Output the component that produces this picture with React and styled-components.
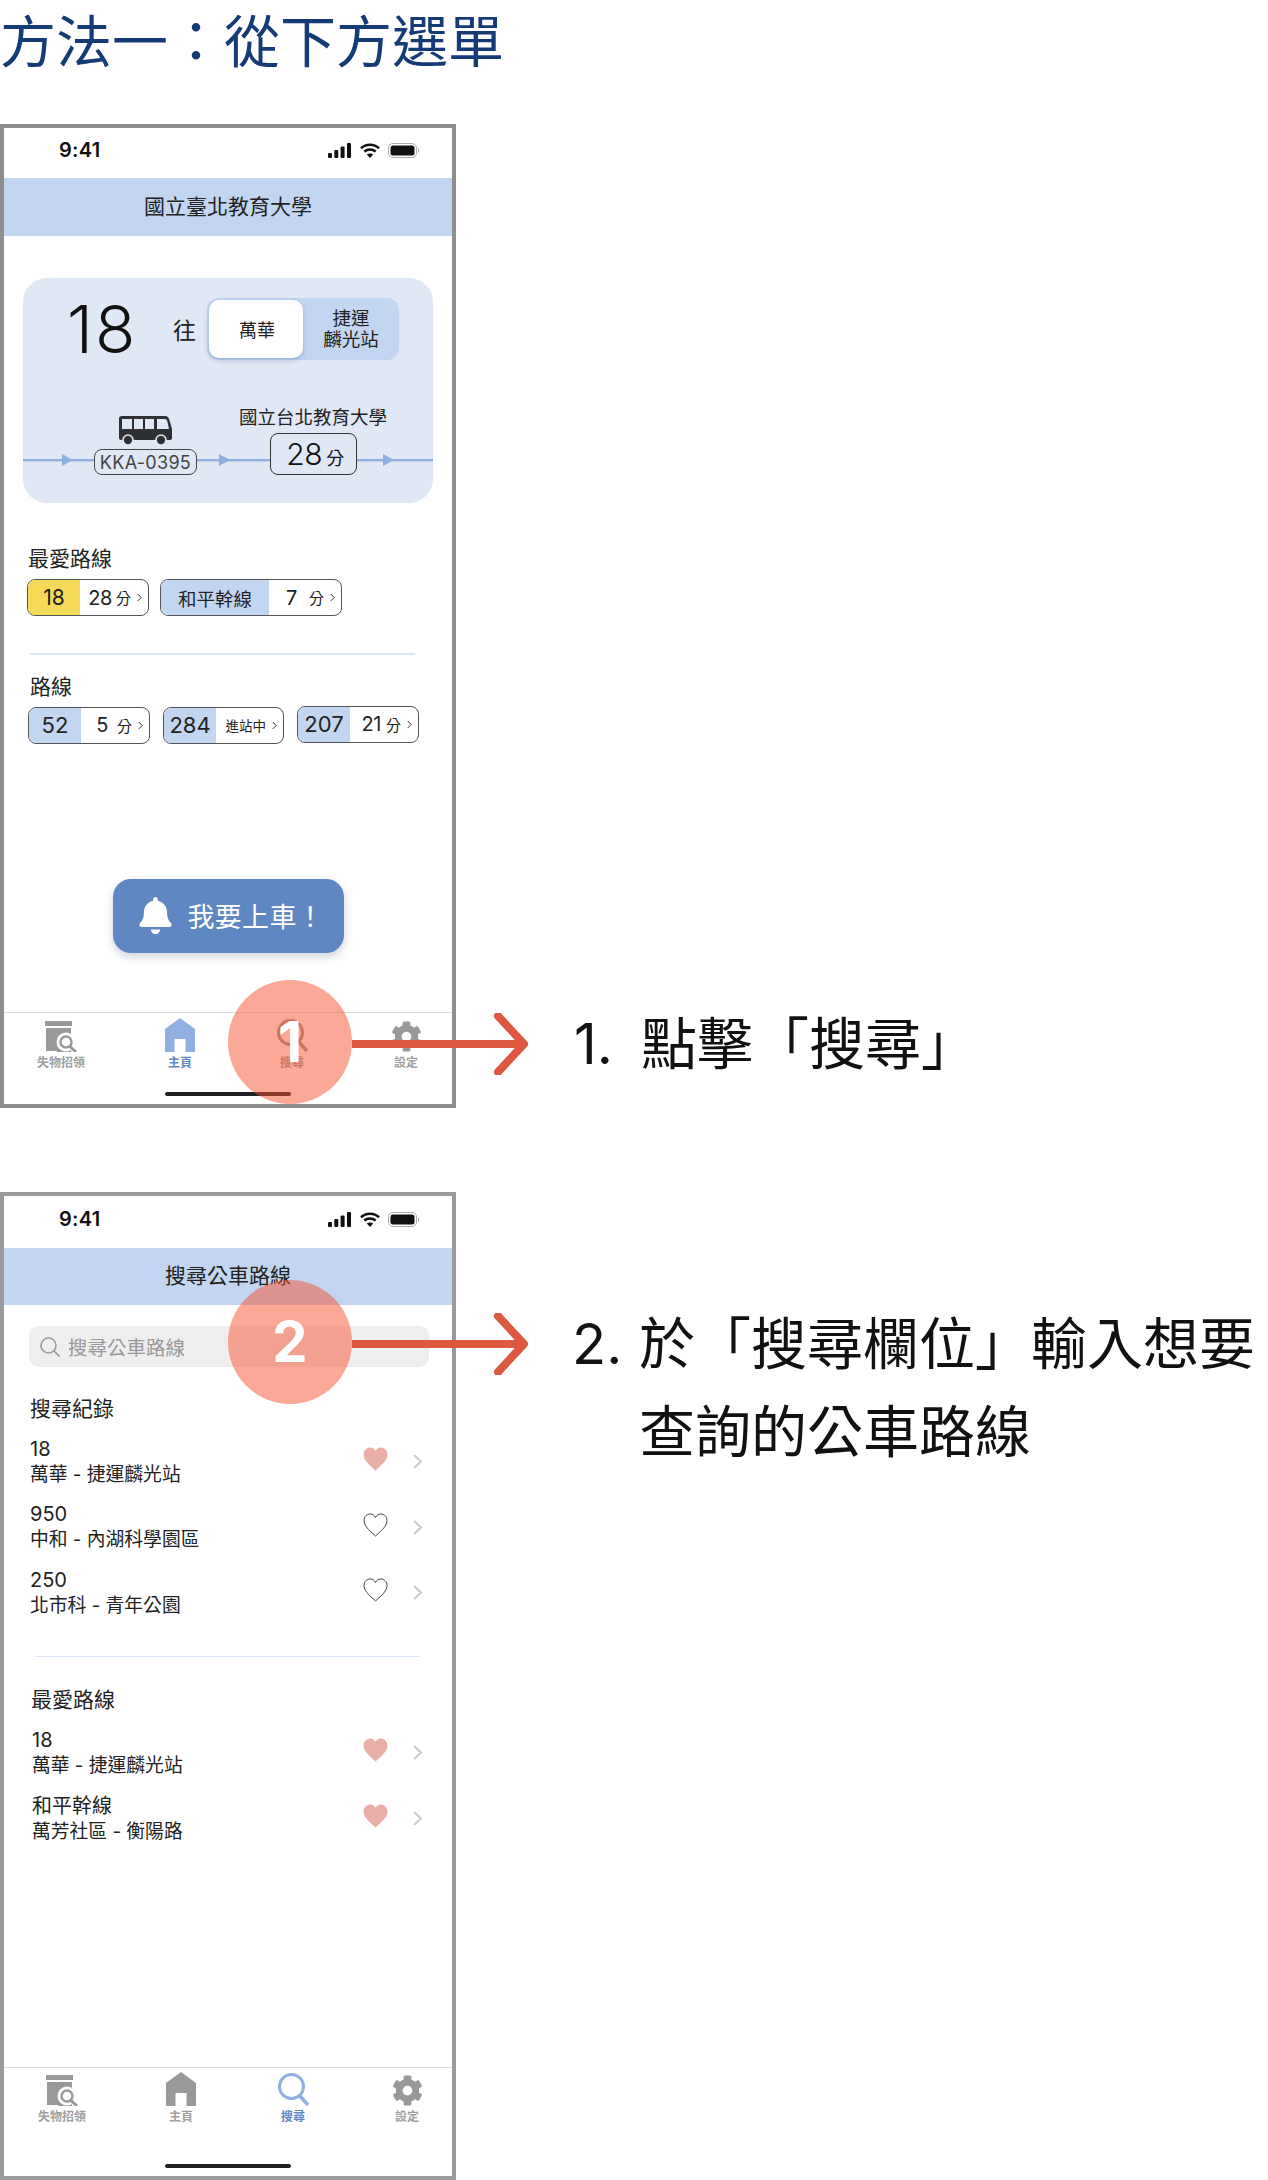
import React from "react";
import styled, { createGlobalStyle } from "styled-components";
import { FaBell, FaCog } from "react-icons/fa";

const FONT = `Inter, "Noto Sans CJK TC", sans-serif`;

const Global = createGlobalStyle`
  html, body { margin: 0; padding: 0; background: #fff; }
  body { font-family: ${FONT}; color: #1a1a1a; }
`;

const Page = styled.div`
  width: 1268px;
  height: 2180px;
  overflow: hidden;
`;
const Title = styled.h1`
  margin: 0 0 40px;
  font-size: 56px;
  line-height: 84px;
  font-weight: 400;
  color: #143b75;
`;
const Step = styled.section`
  position: relative;
  display: flex;
  align-items: flex-start;
  margin-bottom: 84px;
`;
const Phone = styled.div`
  box-sizing: border-box;
  flex: none;
  width: 456px;
  height: ${(p) => p.$height}px;
  border: 4px solid ${(p) => p.$frame};
  display: flex;
  flex-direction: column;
`;

// status bar
const StatusBar = styled.div`
  height: ${(p) => p.$height}px;
  flex: none;
  display: flex;
  align-items: center;
  justify-content: space-between;
  padding: 0 32px 6px 55px;
  box-sizing: border-box;
`;
const Clock = styled.span`
  font-size: 20px;
  font-weight: 600;
  letter-spacing: 0.3px;
  color: #111;
`;
const StatusIcons = styled.div`
  display: flex;
  align-items: center;
  gap: 8.5px;
`;
const Header = styled.div`
  height: ${(p) => p.$height}px;
  flex: none;
  box-sizing: border-box;
  padding-bottom: 5px;
  background: #c2d6f2;
  display: flex;
  align-items: center;
  justify-content: center;
  font-size: 21px;
  color: #222;
`;
const Body = styled.div`
  flex: 1;
  display: flex;
  flex-direction: column;
  min-height: 0;
`;

// main card
const Card = styled.div`
  box-sizing: border-box;
  width: 410px;
  height: 225px;
  margin: 42px 0 0 19px;
  padding-top: 20px;
  background: #e0e7f5;
  border-radius: 24px;
`;
const CardTop = styled.div`
  display: flex;
  align-items: center;
  padding-left: 44px;
`;
const BigNumber = styled.div`
  width: 66px;
  font-size: 66px;
  line-height: 62px;
  font-weight: 300;
  letter-spacing: 2px;
  color: #111;
`;
const Toward = styled.div`
  margin: 0 11px 0 40px;
  font-size: 23px;
  color: #222;
`;
const Toggle = styled.div`
  box-sizing: border-box;
  display: flex;
  width: 192px;
  height: 62px;
  padding: 2px;
  background: #c2d6f2;
  border-radius: 12px;
`;
const ToggleOn = styled.div`
  width: 94px;
  padding-left: 2px;
  box-sizing: border-box;
  border-radius: 10px;
  background: #fff;
  box-shadow: 0 2px 5px rgba(70, 100, 150, 0.35);
  display: flex;
  align-items: center;
  justify-content: center;
  font-size: 18px;
  color: #222;
`;
const ToggleOff = styled.div`
  flex: 1;
  padding-left: 2px;
  text-align: center;
  align-self: center;
  font-size: 18.5px;
  line-height: 21px;
  color: #222;
`;
const RouteArea = styled.div`
  position: relative;
  box-sizing: border-box;
  height: 75px;
  margin-top: 45px;
  padding: 0 0 5px 71px;
  display: flex;
  align-items: flex-end;
  gap: 42px;
`;
const RouteLine = styled.svg`
  position: absolute;
  left: 0;
  top: 48px;
`;
const BusStop = styled.div`
  position: relative;
  display: flex;
  flex-direction: column;
  align-items: center;
  gap: 4px;
`;
const Plate = styled.div`
  box-sizing: border-box;
  width: 103px;
  height: 26px;
  border: 1.5px solid #444;
  border-radius: 8px;
  background: #e0e7f5;
  display: flex;
  align-items: center;
  justify-content: center;
  font-size: 18px;
  letter-spacing: 0.3px;
  color: #444;
`;
const Stop = styled.div`
  position: relative;
  width: 148px;
  display: flex;
  flex-direction: column;
  align-items: center;
  gap: 5px;
`;
const StopName = styled.div`
  font-size: 18.5px;
  line-height: 22px;
  white-space: nowrap;
  color: #222;
`;
const Eta = styled.div`
  box-sizing: border-box;
  width: 87px;
  height: 42px;
  padding-left: 4px;
  border: 1.5px solid #333;
  border-radius: 8px;
  background: #e0e7f5;
  display: flex;
  align-items: center;
  justify-content: center;
  gap: 4px;
  font-size: 30px;
  font-weight: 300;
  letter-spacing: -0.5px;
  color: #111;
`;
const EtaUnit = styled.span`
  font-size: 18px;
  font-weight: 400;
  padding-top: 5px;
`;

// route chips
const SectionLabel = styled.div`
  margin: ${(p) => p.$top}px 0 0 ${(p) => p.$left}px;
  font-size: 21px;
  line-height: 28px;
  color: #222;
`;
const ChipRow = styled.div`
  display: flex;
  gap: ${(p) => p.$gap}px;
  margin: ${(p) => p.$top}px 0 0 ${(p) => p.$left}px;
`;
const Chip = styled.div`
  box-sizing: border-box;
  display: flex;
  width: ${(p) => p.$width}px;
  height: 37px;
  margin-top: ${(p) => p.$raise || 0}px;
  border: 1.5px solid #555;
  border-radius: 8px;
  overflow: hidden;
`;
const ChipName = styled.div`
  flex: none;
  width: ${(p) => p.$width}px;
  background: ${(p) => p.$color};
  display: flex;
  align-items: center;
  justify-content: center;
  font-size: ${(p) => p.$size || 22}px;
  color: #222;
`;
const ChipTime = styled.div`
  flex: 1;
  display: flex;
  align-items: center;
  justify-content: flex-end;
  padding-right: 6px;
  font-size: 20px;
  letter-spacing: -0.4px;
  color: #222;
`;
const ChipUnit = styled.span`
  margin: 0 6px 0 ${(p) => p.$gap}px;
  font-size: ${(p) => p.$size || 15}px;
  letter-spacing: 0;
  white-space: nowrap;
`;
const Divider = styled.div`
  height: 1.5px;
  width: 385px;
  margin: ${(p) => p.$top}px 0 0 ${(p) => p.$left}px;
  background: #dbe6f6;
`;
const BoardButton = styled.div`
  box-sizing: border-box;
  align-self: center;
  width: 231px;
  height: 74px;
  margin-top: 135px;
  padding-left: 24px;
  display: flex;
  align-items: center;
  gap: 14px;
  background: #5f87c2;
  border-radius: 18px;
  box-shadow: 0 4px 10px rgba(60, 80, 120, 0.25);
  font-size: 27px;
  letter-spacing: 0.3px;
  color: #fff;
  white-space: nowrap;
`;

// tabs
const TabBar = styled.div`
  flex: none;
  height: ${(p) => p.$height}px;
  box-sizing: border-box;
  display: flex;
  flex-direction: column;
  border-top: 1.5px solid #ddd;
  padding: ${(p) => p.$top}px 0 8px ${(p) => 17 + p.$shift}px;
`;
const TabRow = styled.div`
  display: flex;
`;
const TabItem = styled.div`
  width: 80px;
  margin-left: ${(p) => p.$gap}px;
  display: flex;
  flex-direction: column;
  align-items: center;
  gap: 4px;
  font-size: 12px;
  line-height: 14px;
  font-weight: 700;
  color: ${(p) => (p.$active ? "#5f87c2" : "#a0a0a0")};
`;
const TabIcon = styled.div`
  height: 34px;
  display: flex;
  align-items: flex-end;
  color: ${(p) => (p.$active ? "#8fb0e0" : "#999")};
`;
const HomeIndicator = styled.div`
  align-self: flex-start;
  width: 126px;
  height: 4px;
  margin: auto 0 0 ${(p) => 144 - p.$shift}px;
  border-radius: 2px;
  background: #1f2024;
`;

// search screen
const SearchBar = styled.div`
  box-sizing: border-box;
  width: 400px;
  height: 41px;
  margin: 21px 0 0 25px;
  padding-left: 11px;
  display: flex;
  align-items: center;
  gap: 8px;
  background: #eee;
  border-radius: 10px;
  font-size: 19.5px;
  color: #999;
`;
const RouteList = styled.div`
  display: flex;
  flex-direction: column;
  gap: ${(p) => p.$gap}px;
  margin: 13.5px 0 0 ${(p) => p.$left}px;
`;
const RouteRow = styled.div`
  display: flex;
  align-items: center;
  width: ${(p) => p.$width}px;
`;
const RouteText = styled.div`
  flex: 1;
  font-size: 18.8px;
  line-height: 25px;
  color: #222;
`;
const RouteNumber = styled.div`
  font-size: 20px;
`;
const HeartWrap = styled.div`
  display: flex;
  margin: -5px 25px 0 0;
`;

// callouts over the phones
const Callout = styled.div`
  position: absolute;
  left: 228px;
  top: ${(p) => p.$top}px;
  display: flex;
  align-items: center;
`;
const Marker = styled.div`
  width: 124px;
  height: 124px;
  border-radius: 50%;
  background: rgba(247, 81, 45, 0.5);
  display: flex;
  align-items: center;
  justify-content: center;
  font-size: 56px;
  font-weight: 700;
  line-height: 1;
  color: #fff;
`;
const Arrow = styled.svg`
  display: block;
  margin-top: 4px;
`;
const Note = styled.div`
  display: grid;
  grid-template-columns: 67px auto;
  margin: ${(p) => p.$top}px 0 0 ${(p) => p.$left}px;
  font-size: 56px;
  line-height: 88px;
  color: #111;
  white-space: nowrap;
`;

const BLUE = "#c2d6f2";
const YELLOW = "#f5da58";

function StatusIconSet() {
  return (
    <StatusIcons>
      <svg width="23" height="15" viewBox="0 0 23 15" fill="#111">
        <rect x="0" y="10" width="4" height="5" rx="1" />
        <rect x="6.3" y="7" width="4" height="8" rx="1" />
        <rect x="12.6" y="3.5" width="4" height="11.5" rx="1" />
        <rect x="19" y="0" width="4" height="15" rx="1" />
      </svg>
      <svg width="20" height="15" viewBox="0 0 20 15" fill="none" stroke="#111" strokeWidth="2.6">
        <path d="M1 5.2 C6 0.6 14 0.6 19 5.2" />
        <path d="M4.3 8.6 C7.6 5.7 12.4 5.7 15.7 8.6" />
        <path d="M10 15 L6.8 11.6 C8.6 10.2 11.4 10.2 13.2 11.6 Z" fill="#111" stroke="none" />
      </svg>
      <svg width="32" height="15" viewBox="0 0 32 15">
        <rect x="0.5" y="0.5" width="28" height="14" rx="4.5" fill="none" stroke="#aaa" />
        <rect x="2.5" y="2.5" width="24" height="10" rx="2.5" fill="#111" />
        <path d="M30 5 C31.5 5.6 31.5 9.4 30 10 Z" fill="#aaa" />
      </svg>
    </StatusIcons>
  );
}

function LostIcon() {
  return (
    <svg width="34" height="34" viewBox="0 0 34 34">
      <rect x="1" y="3" width="27" height="5" fill="#999" />
      <path d="M2 10 H27 V18 H17 V28 V33 H2 Z" fill="#999" />
      <path d="M13 13 H27 V34 H13 Z" fill="#999" />
      <circle cx="22" cy="24" r="9.5" fill="#fff" />
      <circle cx="22" cy="24" r="5.5" fill="#fff" stroke="#999" strokeWidth="2.4" />
      <path d="M26 28.5 L32 34" stroke="#999" strokeWidth="3" />
    </svg>
  );
}

function HomeIcon() {
  return (
    <svg width="30" height="34" viewBox="0 0 30 34" fill="currentColor">
      <path d="M15 0 L30 11 V34 H20.5 V21 H9.5 V34 H0 V11 Z" />
    </svg>
  );
}

function SearchIcon() {
  return (
    <svg width="31" height="33" viewBox="0 0 31 33" fill="none" stroke="currentColor">
      <circle cx="13.5" cy="13.5" r="12" strokeWidth="3" />
      <path d="M22 23 L30 32" strokeWidth="3.6" />
    </svg>
  );
}

function TabBarBlock({ active, height, top, shift }) {
  const tabs = [
    { name: "失物招領", icon: <LostIcon />, gap: 0 },
    { name: "主頁", icon: <HomeIcon />, gap: 39 },
    { name: "搜尋", icon: <SearchIcon />, gap: 32 },
    { name: "設定", icon: <FaCog size={31} />, gap: 34 },
  ];
  return (
    <TabBar $height={height} $top={top} $shift={shift}>
      <TabRow>
        {tabs.map((t) => (
          <TabItem key={t.name} $gap={t.gap} $active={t.name === active}>
            <TabIcon $active={t.name === active}>{t.icon}</TabIcon>
            {t.name}
          </TabItem>
        ))}
      </TabRow>
      <HomeIndicator $shift={shift} />
    </TabBar>
  );
}

function TinyChevron() {
  return (
    <svg width="5" height="9" viewBox="0 0 5 9" fill="none" stroke="#333" strokeWidth="1">
      <path d="M0.7 1 L4.2 4.5 L0.7 8" />
    </svg>
  );
}

function RouteChip({ width, nameWidth, color, name, size, num, gap, unit, unitSize, raise }) {
  return (
    <Chip $width={width} $raise={raise}>
      <ChipName $width={nameWidth} $color={color} $size={size}>{name}</ChipName>
      <ChipTime>
        {num && <span>{num}</span>}
        <ChipUnit $gap={gap} $size={unitSize}>{unit}</ChipUnit>
        <TinyChevron />
      </ChipTime>
    </Chip>
  );
}

function Bus() {
  return (
    <svg width="53" height="29" viewBox="0 0 53 29">
      <path d="M3 0 H46 C49 0 50 2 51 6 L53 13 V22 C53 23 52 24 51 24 H2 C1 24 0 23 0 22 V3 C0 1 1 0 3 0 Z" fill="#2e3033" />
      <g fill="#e0e7f5">
        <rect x="3" y="3" width="10" height="10" />
        <rect x="15" y="3" width="9" height="10" />
        <rect x="26" y="3" width="9" height="10" />
        <path d="M38 3 H46 C47 3 48 4 48.5 6 L50 13 H38 Z" />
      </g>
      <circle cx="9" cy="24" r="5" fill="#2e3033" stroke="#e0e7f5" strokeWidth="1.6" />
      <circle cx="42" cy="24" r="5" fill="#2e3033" stroke="#e0e7f5" strokeWidth="1.6" />
    </svg>
  );
}

function Heart({ filled }) {
  return (
    <svg width="25" height="24" viewBox="0 0 25 24">
      <path
        d="M12.5 23 C9 19.5 1 14 1 7.5 C1 3.5 4 1 7 1 C9.5 1 11.5 2.3 12.5 4.5 C13.5 2.3 15.5 1 18 1 C21 1 24 3.5 24 7.5 C24 14 16 19.5 12.5 23 Z"
        fill={filled ? "#e9aea5" : "none"}
        stroke={filled ? "#e9aea5" : "#444"}
        strokeWidth={1}
      />
    </svg>
  );
}

function Row({ num, route, filled, width }) {
  return (
    <RouteRow $width={width}>
      <RouteText>
        <RouteNumber>{num}</RouteNumber>
        {route}
      </RouteText>
      <HeartWrap><Heart filled={filled} /></HeartWrap>
      <svg width="9" height="15" viewBox="0 0 9 15" fill="none" stroke="#ccc" strokeWidth="2">
        <path d="M1 1 L8 7.5 L1 14" />
      </svg>
    </RouteRow>
  );
}

function Pointer({ top, n }) {
  return (
    <Callout $top={top}>
      <Marker>{n}</Marker>
      <Arrow width="177" height="62" viewBox="0 0 177 62" fill="none" stroke="#dd5840">
        <path d="M0 31 H172" strokeWidth="8" />
        <path d="M146 3 L172 31 L146 59" strokeWidth="8" strokeLinecap="round" strokeLinejoin="round" />
      </Arrow>
    </Callout>
  );
}

function App() {
  return (
    <Page>
      <Global />
      <Title>方法一：從下方選單</Title>

      <Step>
        <Phone $height={984} $frame="#8e8e8e">
          <StatusBar $height={50}>
            <Clock>9:41</Clock>
            <StatusIconSet />
          </StatusBar>
          <Header $height={58}>國立臺北教育大學</Header>
          <Body>
            <Card>
              <CardTop>
                <BigNumber>18</BigNumber>
                <Toward>往</Toward>
                <Toggle>
                  <ToggleOn>萬華</ToggleOn>
                  <ToggleOff>捷運<br />麟光站</ToggleOff>
                </Toggle>
              </CardTop>
              <RouteArea>
                <RouteLine width="410" height="14" viewBox="0 0 410 14" fill="#8fb0e0">
                  <rect x="0" y="6" width="410" height="2.4" />
                  <path d="M39 1 L50 7 L39 13 Z" />
                  <path d="M196 1 L207 7 L196 13 Z" />
                  <path d="M360 1 L371 7 L360 13 Z" />
                </RouteLine>
                <BusStop>
                  <Bus />
                  <Plate>KKA-0395</Plate>
                </BusStop>
                <Stop>
                  <StopName>國立台北教育大學</StopName>
                  <Eta>28<EtaUnit>分</EtaUnit></Eta>
                </Stop>
              </RouteArea>
            </Card>
            <SectionLabel $top={42} $left={24}>最愛路線</SectionLabel>
            <ChipRow $top={6} $left={23} $gap={11}>
              <RouteChip width={122} nameWidth={52} color={YELLOW} name="18" size={21} num="28" gap={4} unit="分" />
              <RouteChip width={182} nameWidth={108} color={BLUE} name="和平幹線" size={18.5} num="7" gap={12} unit="分" />
            </ChipRow>
            <Divider $top={37} $left={26} />
            <SectionLabel $top={18} $left={26}>路線</SectionLabel>
            <ChipRow $top={6} $left={24} $gap={13}>
              <RouteChip width={122} nameWidth={52} color={BLUE} name="52" num="5" gap={9} unit="分" />
              <RouteChip width={121} nameWidth={52} color={BLUE} name="284" gap={0} unit="進站中" unitSize={13.5} />
              <RouteChip width={122} nameWidth={52} color={BLUE} name="207" num="21" gap={5} unit="分" raise={-1} />
            </ChipRow>
            <BoardButton>
              <FaBell size={37} />
              <span>我要上車！</span>
            </BoardButton>
          </Body>
          <TabBarBlock active="主頁" height={92} top={4.5} shift={0} />
        </Phone>
        <Pointer top={856} n="1" />
        <Note $top={876} $left={118}>
          <span>1.</span>
          <span>點擊「搜尋」</span>
        </Note>
      </Step>

      <Step>
        <Phone $height={988} $frame="#9b9b9b">
          <StatusBar $height={52}>
            <Clock>9:41</Clock>
            <StatusIconSet />
          </StatusBar>
          <Header $height={57}>搜尋公車路線</Header>
          <Body>
            <SearchBar>
              <svg width="20" height="20" viewBox="0 0 20 20" fill="none" stroke="#999" strokeWidth="1.6">
                <circle cx="8.5" cy="8.5" r="7.5" />
                <path d="M14 14 L19.5 19.5" />
              </svg>
              搜尋公車路線
            </SearchBar>
            <SectionLabel $top={28} $left={26}>搜尋紀錄</SectionLabel>
            <RouteList $left={26} $gap={15.5}>
              <Row width={392} num="18" route="萬華 - 捷運麟光站" filled />
              <Row width={392} num="950" route="中和 - 內湖科學園區" />
              <Row width={392} num="250" route="北市科 - 青年公園" />
            </RouteList>
            <Divider $top={38} $left={31} />
            <SectionLabel $top={29} $left={27}>最愛路線</SectionLabel>
            <RouteList $left={28} $gap={16}>
              <Row width={390} num="18" route="萬華 - 捷運麟光站" filled />
              <Row width={390} num="和平幹線" route="萬芳社區 - 衡陽路" filled />
            </RouteList>
          </Body>
          <TabBarBlock active="搜尋" height={109} top={3.5} shift={1} />
        </Phone>
        <Pointer top={88} n="2" />
        <Note $top={108} $left={116}>
          <span>2.</span>
          <span>於「搜尋欄位」輸入想要<br />查詢的公車路線</span>
        </Note>
      </Step>
    </Page>
  );
}

export default App;
